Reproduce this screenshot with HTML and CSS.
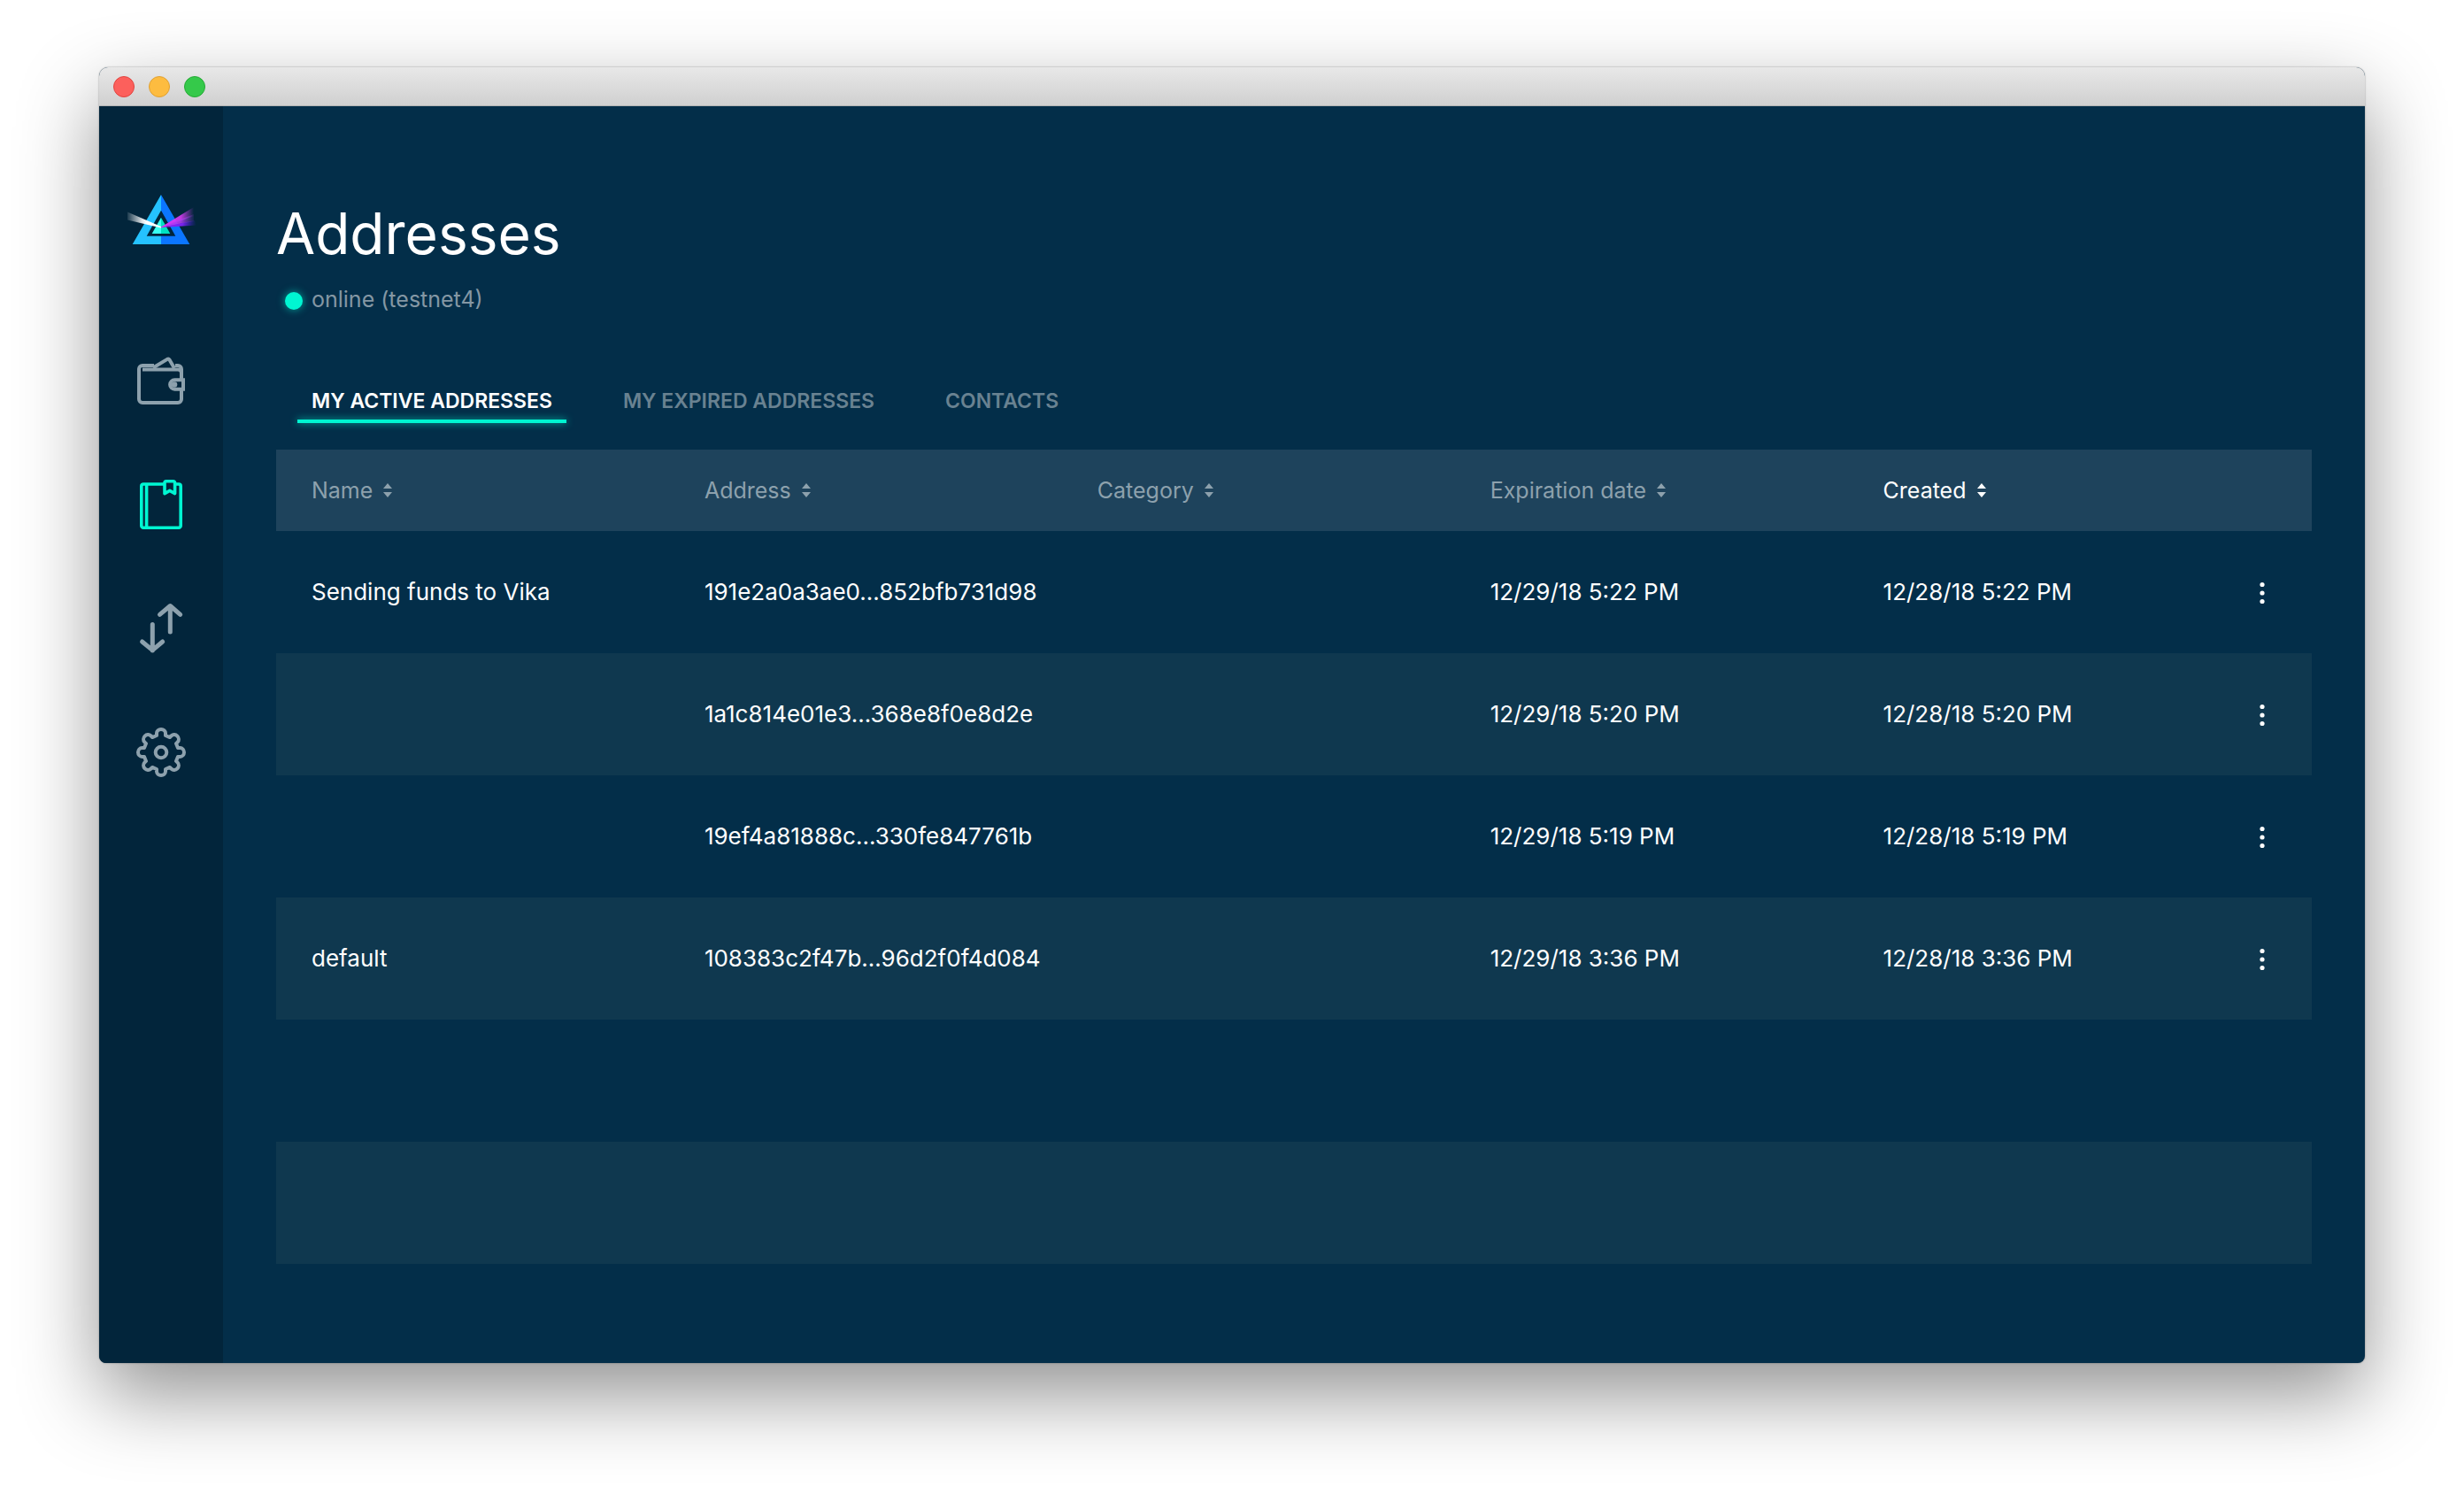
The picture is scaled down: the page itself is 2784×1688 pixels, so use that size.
FILE: index.html
```html
<!DOCTYPE html>
<html lang="en">
<head>
<meta charset="utf-8">
<meta name="viewport" content="width=device-width, initial-scale=1">
<title>Addresses</title>
<link rel="stylesheet" href="styles.css">
</head>
<body>
<svg class="defs" aria-hidden="true">
  <symbol id="sort" viewBox="0 0 10 16"><path d="M5 0l5 6H0zM5 16l5-6H0z" fill="currentColor"/></symbol>
  <symbol id="more" viewBox="0 0 6 26"><g fill="currentColor"><circle cx="3" cy="3.500" r="2.600"/><circle cx="3" cy="13" r="2.600"/><circle cx="3" cy="22.500" r="2.600"/></g></symbol>
</svg>
<div class="window">
  <header class="titlebar">
    <button class="light close" type="button" aria-label="Close"></button>
    <button class="light minimize" type="button" aria-label="Minimize"></button>
    <button class="light zoom" type="button" aria-label="Zoom"></button>
  </header>
  <div class="app">
    <aside class="sidebar">
      <svg class="logo" viewBox="0 0 80 56" aria-hidden="true">
        <defs>
          <linearGradient id="beam-in" x1="0" x2="1"><stop offset="0" stop-color="#fff" stop-opacity=".1"/><stop offset=".45" stop-color="#fff" stop-opacity=".9"/><stop offset=".6" stop-color="#fff"/></linearGradient>
          <linearGradient id="beam-a" x1="0" x2="1"><stop offset="0" stop-color="#e02ff0"/><stop offset=".6" stop-color="#d83cf5" stop-opacity=".9"/><stop offset="1" stop-color="#c040e0" stop-opacity="0"/></linearGradient>
          <linearGradient id="beam-b" x1="0" x2="1"><stop offset="0" stop-color="#c42ff0"/><stop offset=".6" stop-color="#b03cf0" stop-opacity=".9"/><stop offset="1" stop-color="#9040e0" stop-opacity=".1"/></linearGradient>
          <linearGradient id="beam-c" x1="0" x2="1"><stop offset="0" stop-color="#9a1ff0"/><stop offset=".6" stop-color="#7a22f0"/><stop offset="1" stop-color="#3a20d0" stop-opacity="0"/></linearGradient>
        </defs>
        <path d="M40 0L7.700 56H40V46.700H23.700L40 17.700z" fill="#25c2ff"/>
        <path d="M40 0l32.300 56H40v-9.300h16.300L40 17.700z" fill="#0b76ff"/>
        <path d="M40 25.700L29.700 44H40z" fill="#39fff2"/>
        <path d="M40 25.700L50.300 44H40z" fill="#00e2c2"/>
        <path d="M2 19.500v9l38 9v-1.500z" fill="url(#beam-in)"/>
        <path d="M40 36.500L77 14v10L40 37.500z" fill="url(#beam-a)"/>
        <path d="M40 37l37-15v8z" fill="url(#beam-b)"/>
        <path d="M40 37l38-8 2 5.500z" fill="url(#beam-c)"/>
      </svg>
      <nav class="nav" aria-label="Main">
        <a href="#wallet" aria-label="Wallet"><svg viewBox="0 0 56 56"><g fill="none" stroke="currentColor" stroke-width="4" stroke-linejoin="round"><path d="M51 27V19.500a4 4 0 0 0-4-4H7M51 38v11a4 4 0 0 1-4 4H7a4 4 0 0 1-4-4V15a4 4 0 0 1 4-4h13M44 11h3a4 4 0 0 1 4 4v6"/><path d="M19 13.500L35 3.900a2 2 0 0 1 2.500.6L43 14"/><path d="M53 27.300v10.400h-9.700a5.200 5.200 0 0 1 0-10.400z" stroke-linejoin="miter"/></g><circle cx="43" cy="32.500" r="3.300" fill="currentColor"/></svg></a>
        <a class="current" href="#addresses" aria-label="Addresses" aria-current="page"><svg viewBox="0 0 56 56"><g fill="none" stroke="currentColor" stroke-width="3.600" stroke-linejoin="round"><path d="M32 5H8a2.200 2.200 0 0 0-2.200 2.200v44.800A2.200 2.200 0 0 0 8 54.200h40a2.200 2.200 0 0 0 2.200-2.200V7.200A2.200 2.200 0 0 0 48 5h-4M11.600 5v49"/><path d="M33.800 1.800h8a1.800 1.800 0 0 1 1.800 1.800v12l-5.800-3.200-5.800 3.200v-12a1.800 1.800 0 0 1 1.800-1.800z"/></g></svg></a>
        <a href="#transfers" aria-label="Transfers"><svg viewBox="0 0 56 56"><path d="M38.300 32V3M26.500 12.300L38.300 2.500l11.400 9.800M18.300 23.500V53M6.600 43l11.700 9.700L29.700 43" fill="none" stroke="currentColor" stroke-width="5" stroke-linecap="round" stroke-linejoin="round"/></svg></a>
        <a href="#settings" aria-label="Settings"><svg viewBox="-28 -28 56 56"><g fill="none" stroke="currentColor" stroke-width="4" stroke-linejoin="round"><circle r="6.300"/><path d="M-5-19V-21.500A5 4.500 0 0 1 5-21.500V-19L9.900-16.970 11.670-18.740A5 4.500 45 0 1 18.740-11.670L16.970-9.900 19-5H21.500A4.500 5 0 0 1 21.500 5H19L16.970 9.900 18.740 11.670A5 4.500 135 0 1 11.670 18.740L9.900 16.970 5 19V21.500A5 4.500 0 0 1-5 21.500V19L-9.900 16.970-11.670 18.740A5 4.500 45 0 1-18.740 11.670L-16.970 9.900-19 5H-21.500A4.500 5 0 0 1-21.500-5H-19L-16.970-9.900-18.740-11.670A5 4.500 135 0 1-11.670-18.740L-9.900-16.970z"/></g></svg></a>
      </nav>
    </aside>
    <main class="content">
      <h1>Addresses</h1>
      <p class="status"><span class="status-dot"></span>online (testnet4)</p>
      <div class="tabs" role="tablist">
        <button class="tab active" type="button" role="tab" aria-selected="true">MY ACTIVE ADDRESSES</button>
        <button class="tab" type="button" role="tab" aria-selected="false">MY EXPIRED ADDRESSES</button>
        <button class="tab" type="button" role="tab" aria-selected="false">CONTACTS</button>
      </div>
      <table class="addresses">
        <colgroup><col class="data"><col class="data"><col class="data"><col class="data"><col class="data"><col></colgroup>
        <thead>
          <tr>
            <th scope="col"><button class="sort" type="button">Name<svg><use href="#sort"/></svg></button></th>
            <th scope="col"><button class="sort" type="button">Address<svg><use href="#sort"/></svg></button></th>
            <th scope="col"><button class="sort" type="button">Category<svg><use href="#sort"/></svg></button></th>
            <th scope="col"><button class="sort" type="button">Expiration date<svg><use href="#sort"/></svg></button></th>
            <th scope="col" aria-sort="descending"><button class="sort sorted" type="button">Created<svg><use href="#sort"/></svg></button></th>
            <td></td>
          </tr>
        </thead>
        <tbody>
          <tr><td>Sending funds to Vika</td><td>191e2a0a3ae0...852bfb731d98</td><td></td><td>12/29/18 5:22 PM</td><td>12/28/18 5:22 PM</td><td class="actions"><button class="more" type="button" aria-label="Actions"><svg><use href="#more"/></svg></button></td></tr>
          <tr><td></td><td>1a1c814e01e3...368e8f0e8d2e</td><td></td><td>12/29/18 5:20 PM</td><td>12/28/18 5:20 PM</td><td class="actions"><button class="more" type="button" aria-label="Actions"><svg><use href="#more"/></svg></button></td></tr>
          <tr><td></td><td>19ef4a81888c...330fe847761b</td><td></td><td>12/29/18 5:19 PM</td><td>12/28/18 5:19 PM</td><td class="actions"><button class="more" type="button" aria-label="Actions"><svg><use href="#more"/></svg></button></td></tr>
          <tr><td>default</td><td>108383c2f47b...96d2f0f4d084</td><td></td><td>12/29/18 3:36 PM</td><td>12/28/18 3:36 PM</td><td class="actions"><button class="more" type="button" aria-label="Actions"><svg><use href="#more"/></svg></button></td></tr>
          <tr aria-hidden="true"><td colspan="6"></td></tr>
          <tr aria-hidden="true"><td colspan="6"></td></tr>
        </tbody>
      </table>
    </main>
  </div>
</div>
</body>
</html>
```
FILE: styles.css
```css
*, *::before, *::after { box-sizing: border-box; }

body {
  margin: 0;
  min-height: 100vh;
  display: flex;
  padding: 76px 112px 148px;
  background: #fff;
  color: #fff;
  font: 400 26px/34px Inter, "Liberation Sans", sans-serif;
}

button {
  padding: 0;
  border: 0;
  background: none;
  color: inherit;
  font: inherit;
  cursor: pointer;
}

svg { display: block; }
.defs { position: absolute; width: 0; height: 0; }

.window {
  flex: 1;
  display: flex;
  flex-direction: column;
  border-radius: 10px 10px 8px 8px;
  overflow: hidden;
  background: #032e49;
  box-shadow: 0 0 2px rgba(0, 0, 0, .4), 0 36px 90px rgba(0, 0, 0, .43);
}

.titlebar {
  display: flex;
  align-items: center;
  gap: 16px;
  height: 44px;
  padding: 0 16px;
  border-bottom: 1px solid #b4b4b4;
  background: linear-gradient(#e8e8e8, #d0d0d0);
}

.light {
  width: 24px;
  height: 24px;
  border: 1px solid;
  border-radius: 50%;
}
.close { background: #fc605c; border-color: #e0443f; }
.minimize { background: #fdbc40; border-color: #dfa033; }
.zoom { background: #35c94a; border-color: #25a935; }

.app { flex: 1; display: flex; }

.sidebar {
  width: 140px;
  flex: none;
  display: flex;
  flex-direction: column;
  align-items: center;
  gap: 126px;
  padding-top: 100px;
  background: #02253b;
}
.logo { width: 80px; height: 56px; }

.nav { display: flex; flex-direction: column; gap: 84px; }
.nav a { color: #8da1ad; }
.nav svg { width: 56px; height: 56px; overflow: visible; }
.nav .current { color: #00f6d2; }

.content { flex: 1; min-width: 0; padding: 100px 60px 112px; }

h1 {
  margin: 0;
  font-size: 64px;
  font-weight: 400;
  line-height: 88px;
}

.status {
  display: flex;
  align-items: center;
  gap: 10px;
  margin: 13px 0 0;
  padding-left: 10px;
  color: #8497a4;
  font-size: 25px;
  line-height: 34px;
}
.status-dot {
  width: 20px;
  height: 20px;
  margin-top: 4px;
  border-radius: 50%;
  background: #00f6d2;
  box-shadow: 0 0 10px rgba(0, 246, 210, .6);
}

.tabs { display: flex; gap: 48px; margin: 83px 0 30px; padding-left: 24px; }
.tab {
  padding: 0 16px 6px;
  border-bottom: 4px solid transparent;
  color: #698291;
  font-size: 23px;
  font-weight: 600;
  line-height: 30px;
}
.tab.active {
  position: relative;
  color: #fff;
}
.tab.active::after {
  content: "";
  position: absolute;
  inset: auto 0 -4px;
  height: 4px;
  background: #00f6d2;
  box-shadow: 0 0 8px rgba(0, 246, 210, .7);
}

.addresses {
  width: 100%;
  border-collapse: collapse;
  table-layout: fixed;
}
.data { width: 19.3%; }
th, td { padding: 0 0 0 40px; text-align: left; font-weight: 400; }
thead tr { height: 92px; background: #1e435c; color: #8da1ad; font-size: 25px; }
tbody tr { height: 138px; }
tbody tr:nth-child(even) { background: #0f384f; }

.sort { display: inline-flex; align-items: center; gap: 12px; }
.sort svg { width: 10px; height: 16px; }
.sorted { color: #fff; }

.addresses .actions { padding-left: 8px; }
.more { display: flex; align-items: center; justify-content: center; width: 34px; height: 48px; padding-top: 2px; }
.more svg { width: 6px; height: 26px; }
```
